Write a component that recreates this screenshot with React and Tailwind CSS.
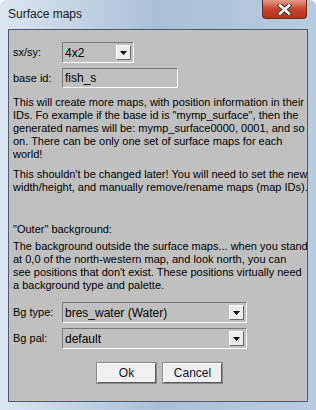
import React from 'react'

const font = { fontFamily: '"Liberation Sans", Arial, sans-serif' }

function Arrow() {
  return (
    <svg width="7" height="4" viewBox="0 0 7 4">
      <path d="M0 0h7L3.5 4z" fill="#000" />
    </svg>
  )
}

function Select({ value, width }) {
  return (
    <div
      className={`flex items-center h-[21px] ${width} bg-[#c0c0c0] border border-t-[#7a7a7a] border-l-[#7a7a7a] border-b-white border-r-white`}
    >
      <span className="flex-1 pl-[2px] text-[12px] leading-none text-black">{value}</span>
      <div className="w-[15px] h-[15px] mr-[2px] flex items-center justify-center bg-[#ececec] border border-t-white border-l-white border-b-[#6a6a6a] border-r-[#6a6a6a]">
        <Arrow />
      </div>
    </div>
  )
}

function Button({ children }) {
  return (
    <button className="h-[20px] w-[59px] bg-[#f0f0f0] border border-t-white border-l-white border-b-[#5a5a5a] border-r-[#5a5a5a] outline outline-1 outline-[#8a8a8a] text-[12px] leading-none text-[#101030]">
      {children}
    </button>
  )
}

export default function App() {
  return (
    <div
      style={font}
      className="relative w-[316px] h-[410px] overflow-hidden rounded-t-[6px] bg-gradient-to-r from-[#dbe6f1] via-[#a9c0d8] to-[#b8cce0] flex flex-col"
    >
      {/* title bar */}
      <div className="h-[29px] shrink-0 flex items-center pl-[8px] pb-[2px]">
        <span className="text-[12px] text-[#1a1a1a]">Surface maps</span>
      </div>
      <button className="absolute right-[9px] top-0 w-[45px] h-[19px] rounded-b-[4px] bg-gradient-to-b from-[#e39a8a] via-[#c8432c] to-[#b3321c] border border-t-0 border-[#6b2a20] flex items-center justify-center">
        <svg width="15" height="11" viewBox="0 0 15 11">
          <path d="M3 1.5l9 8M12 1.5l-9 8" stroke="#3b3b3b" strokeWidth="4.5" strokeLinecap="square" />
          <path d="M3 1.5l9 8M12 1.5l-9 8" stroke="#fff" strokeWidth="2.5" strokeLinecap="square" />
        </svg>
      </button>

      {/* client area */}
      <div className="mx-[8px] mb-[8px] flex-1 border border-[#4d5b6a] bg-[#c0c0c0] text-[11px] leading-[13px] text-black px-[4px]">
        <div className="flex items-center mt-[12px]">
          <span className="w-[49px] text-[11px]">sx/sy:</span>
          <Select value="4x2" width="w-[72px]" />
        </div>
        <div className="flex items-center mt-[5px]">
          <span className="w-[49px]">base id:</span>
          <div className="h-[20px] w-[116px] flex items-center pl-[2px] bg-[#c0c0c0] border border-t-[#7a7a7a] border-l-[#7a7a7a] border-b-white border-r-white text-[12px]">
            fish_s
          </div>
        </div>

        <p className="mt-[8px] whitespace-nowrap">
          This will create more maps, with position information in their
          <br />
          IDs. Fo example if the base id is "mymp_surface", then the
          <br />
          generated names will be: mymp_surface0000, 0001, and so
          <br />
          on. There can be only one set of surface maps for each
          <br />
          world!
        </p>
        <p className="mt-[7px] whitespace-nowrap">
          This shouldn't be changed later! You will need to set the new
          <br />
          width/height, and manually remove/rename maps (map IDs).
        </p>

        <p className="mt-[29px]">"Outer" background:</p>
        <p className="mt-[4px] whitespace-nowrap">
          The background outside the surface maps... when you stand
          <br />
          at 0,0 of the north-western map, and look north, you can
          <br />
          see positions that don't exist. These positions virtually need
          <br />
          a background type and palette.
        </p>

        <div className="flex items-center mt-[10px]">
          <span className="w-[49px]">Bg type:</span>
          <Select value="bres_water (Water)" width="w-[185px]" />
        </div>
        <div className="flex items-center mt-[5px]">
          <span className="w-[49px]">Bg pal:</span>
          <Select value="default" width="w-[185px]" />
        </div>

        <div className="flex justify-center gap-[7px] mt-[14px] pl-[3px]">
          <Button>Ok</Button>
          <Button>Cancel</Button>
        </div>
      </div>
    </div>
  )
}
